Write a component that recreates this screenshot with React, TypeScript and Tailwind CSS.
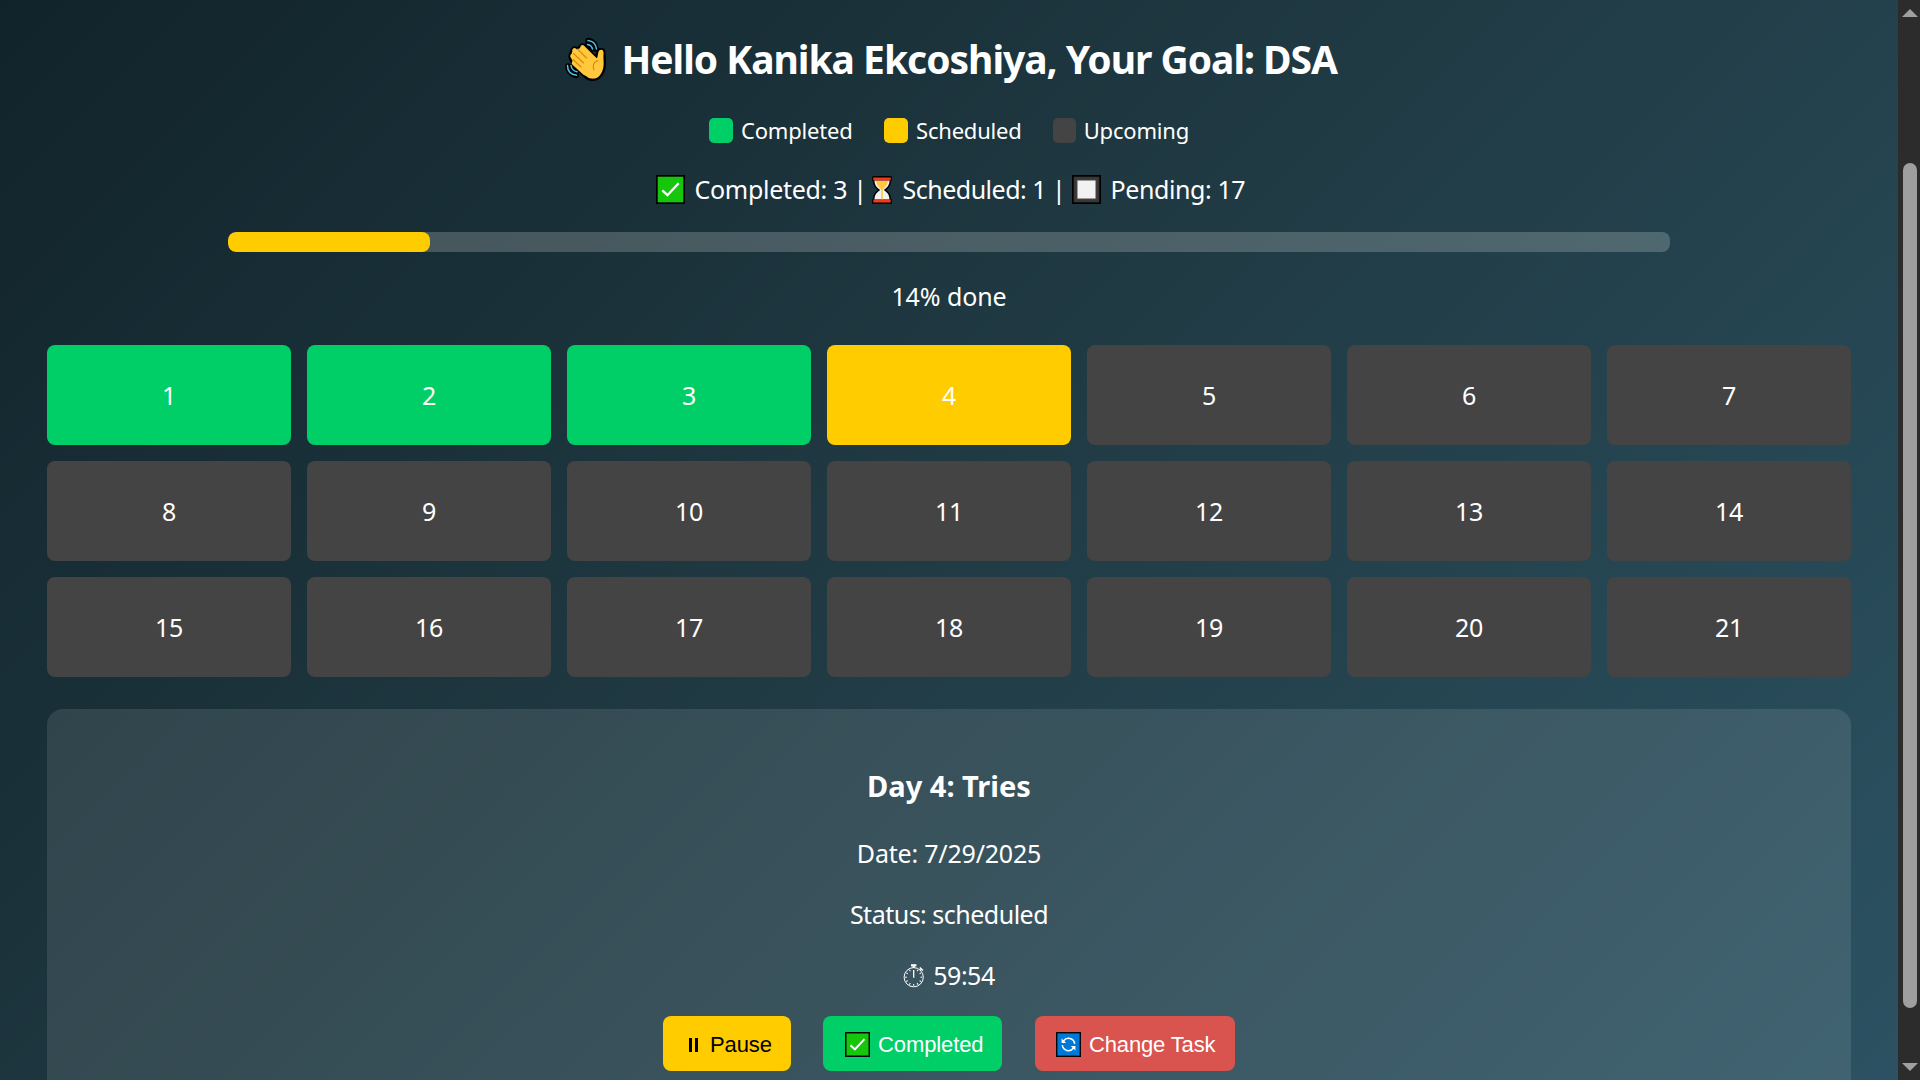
import type { ReactNode } from "react";

const HAND =
  "M16.5 12 L8.5 15.5 L7.5 20.5 L10 26 L22 38 C25 41 31 41 34 37 C37.5 33 37.5 27 37 22 L36.6 15 L35 15 L33 24 Z";

function WaveIcon() {
  return (
    <svg viewBox="0 0 41 44" className="mt-0.5 h-[44px] w-[41px] shrink-0" fill="none" strokeLinecap="round" strokeLinejoin="round">
      <g stroke="#000" strokeWidth="5.6">
        <path d="M23 3.5 C27.5 4 30.5 7 31 12" />
        <path d="M22.5 7.5 C25 8 26.5 9.5 27 12" />
        <path d="M3 29 C3 34 6.5 37.5 11.5 38.5" />
        <path d="M6.5 29.5 C7 32.5 9 34.5 11.5 35" />
      </g>
      <path d={HAND} stroke="#000" strokeWidth="7.6" fill="#000" />
      <g stroke="#000" strokeWidth="8">
        <path d="M17.5 10.5 L30 23" />
        <path d="M9.5 13.5 L24 28" />
        <path d="M7.5 19 L22 32" />
        <path d="M36.2 15 L35.5 24" />
      </g>
      <g stroke="#4cc2e4" strokeWidth="1.5">
        <path d="M23 3.5 C28 4 31 7.5 31.5 12" />
        <path d="M22.5 7.5 C25.5 8 27 9.5 27.5 12" />
        <path d="M2.5 28.5 C2.5 34 6 37.5 11.5 38.3" />
        <path d="M6 28.5 C6.5 32 8.5 34 12 34.8" />
      </g>
      <path d={HAND} stroke="#ffc83d" strokeWidth="3" fill="#ffc83d" />
      <g stroke="#ffc83d" strokeWidth="4.6">
        <path d="M17.5 10.5 L30 23" />
        <path d="M9.5 13.5 L24 28" />
        <path d="M7.5 19 L22 32" />
        <path d="M9 26 L20 36" />
        <path d="M36.2 15 L35.5 24" />
      </g>
      <g stroke="#d67d00" strokeWidth="1.1" opacity="0.85">
        <path d="M12.5 12 L21.5 21" />
        <path d="M8.5 16.5 L18.5 26" />
        <path d="M8 22.5 L16 30" />
        <path d="M33 23.5 C29 24.5 27 28.5 29 33" />
      </g>
    </svg>
  );
}

function CheckIcon({ className }: { className: string }) {
  return (
    <svg viewBox="0 0 29 29" className={className}>
      <rect width="29" height="29" fill="#000" />
      <rect x="1.7" y="1.7" width="25.6" height="25.6" fill="#16c60c" />
      <path d="M6.3 15.3 L11.5 20.2 L22.6 8.2" fill="none" stroke="#fff" strokeWidth="2.3" />
    </svg>
  );
}

function HourglassIcon() {
  return (
    <svg viewBox="0 0 20 28" className="h-[28px] w-[20px] shrink-0">
      <path
        d="M1.5 0 H18.5 Q20 0 20 1.5 V4 Q20 5 19 5.3 C19 9 17.5 11.5 14 14 C17.5 16.5 19 19 19 22.7 Q20 23 20 24 V26.5 Q20 28 18.5 28 H1.5 Q0 28 0 26.5 V24 Q0 23 1 22.7 C1 19 2.5 16.5 6 14 C2.5 11.5 1 9 1 5.3 Q0 5 0 4 V1.5 Q0 0 1.5 0 Z"
        fill="#000"
      />
      <path d="M2.5 4.5 H17.5 C17.5 9 15.5 11.3 11.8 14 C15.5 16.7 17.5 19 17.5 23.5 H2.5 C2.5 19 4.5 16.7 8.2 14 C4.5 11.3 2.5 9 2.5 4.5 Z" fill="#f2f2f2" />
      <path d="M4 5 H16 C15.5 9 13.5 11 10.8 13.5 V23.5 H9.2 V13.5 C6.5 11 4.5 9 4 5 Z" fill="#ffc83d" />
      <rect x="1.3" y="1.5" width="17.4" height="3" fill="#f03a17" />
      <rect x="1.3" y="23.5" width="17.4" height="3" fill="#f03a17" />
    </svg>
  );
}

function SquareIcon() {
  return (
    <svg viewBox="0 0 29 29" className="h-[29px] w-[29px] shrink-0">
      <rect width="29" height="29" fill="#000" />
      <rect x="1.7" y="1.7" width="25.6" height="25.6" fill="#383838" />
      <rect x="4.5" y="4.5" width="20" height="20" fill="#4d4545" />
      <rect x="5.5" y="5.5" width="18" height="18" fill="#f2f2f2" />
    </svg>
  );
}

function RefreshIcon() {
  return (
    <svg viewBox="0 0 25 25" className="h-[25px] w-[25px] shrink-0" fill="none">
      <rect width="25" height="25" fill="#000" />
      <rect x="1.4" y="1.4" width="22.2" height="22.2" fill="#0078d7" />
      <g stroke="#fff" strokeWidth="1.5">
        <path d="M7.5 9 A6.2 6.2 0 0 1 18.7 11.8" />
        <path d="M17.500 16 A6.2 6.2 0 0 1 6.3 13.2" />
      </g>
      <path d="M5.6 6.500 V11 H10.2 Z M19.4 18.500 V14 H14.8 Z" fill="#fff" />
    </svg>
  );
}

const TICKS = [30, 60, 90, 120, 150, 180, 210, 240, 270, 300, 330];

function StopwatchIcon() {
  return (
    <svg viewBox="0 0 22 24" className="h-[24px] w-[22px] shrink-0" fill="none" stroke="#fff">
      <circle cx="10.7" cy="13.2" r="9.6" strokeWidth="1" />
      <path d="M10.7 6 V13.8" strokeWidth="1.3" />
      <path d="M8 1.3 H13.4" strokeWidth="2.2" />
      <path d="M10.7 2 V4" strokeWidth="2" />
      <path d="M16.8 3.5 L20 6.5 M18.4 5 L17 6.5" strokeWidth="1.5" />
      {TICKS.map((a) => (
        <path key={a} d="M10.7 4.6 V6.4" strokeWidth="1" transform={`rotate(${a} 10.7 13.2)`} />
      ))}
    </svg>
  );
}

function LegendItem({ color, width, children }: { color: string; width: string; children: ReactNode }) {
  return (
    <div className={`flex items-center ${width}`}>
      <span className={`h-[25px] w-6 rounded-[5px] ${color}`} />
      <span className="ml-2 text-[22px] tracking-[-0.2px]">{children}</span>
    </div>
  );
}

function dayColor(day: number) {
  if (day <= 3) return "bg-[#00ce66]";
  if (day === 4) return "bg-[#ffcc00]";
  return "bg-[#444444]";
}

const DAYS = Array.from({ length: 21 }, (_, i) => i + 1);

export default function App() {
  return (
    <div className="flex h-screen overflow-hidden bg-[#2c2c2c] font-['Noto_Sans',sans-serif] text-[25px] whitespace-nowrap text-white">
      <main className="flex h-full w-[1898px] shrink-0 flex-col overflow-hidden bg-[linear-gradient(135deg,#0f2027,#203a43,#2c5364)] bg-[length:100%_1329px] bg-[position:0_-183px] px-[47px] pt-7">
        <header className="flex h-[60px] shrink-0 items-center justify-center">
          <div className="flex w-[769px] items-center">
            <WaveIcon />
            <h1 className="mt-0.5 ml-4 text-[39px] leading-[60px] font-bold tracking-[-1.02px]">
              Hello Kanika Ekcoshiya, Your Goal: DSA
            </h1>
          </div>
        </header>

        <div className="flex h-[85px] shrink-0 items-center justify-center">
          <LegendItem color="bg-[#00ce66]" width="w-[175px]">Completed</LegendItem>
          <LegendItem color="bg-[#ffcc00]" width="w-[169px]">Scheduled</LegendItem>
          <LegendItem color="bg-[#444444]" width="w-[136px]">Upcoming</LegendItem>
        </div>

        <div className="flex h-[33px] shrink-0 items-center justify-center">
          <CheckIcon className="h-[29px] w-[29px] shrink-0" />
          <span className="ml-[10px] w-[177px] tracking-[-0.3px]">Completed: 3 |</span>
          <HourglassIcon />
          <span className="ml-[11px] w-[169px] tracking-[-0.5px]">Scheduled: 1 |</span>
          <SquareIcon />
          <span className="ml-[10px] w-[132px] tracking-[-0.4px]">Pending: 17</span>
        </div>

        <div className="mx-auto mt-[26px] h-5 w-[1442px] shrink-0 overflow-hidden rounded-lg bg-white/20">
          <div className="h-full w-[14%] rounded-lg bg-[#ffcc00]" />
        </div>

        <p className="flex h-[93px] shrink-0 items-center justify-center pb-[3px] tracking-[-0.1px]">14% done</p>

        <div className="grid shrink-0 grid-cols-7 gap-4">
          {DAYS.map((day) => (
            <div key={day} className={`flex h-[100px] items-center justify-center rounded-lg pt-px tracking-[-0.2px] ${dayColor(day)}`}>
              {day}
            </div>
          ))}
        </div>

        <section className="mt-8 flex h-[500px] shrink-0 flex-col items-center rounded-2xl bg-white/10 pt-10">
          <h2 className="text-[29px] leading-[74px] font-bold">Day 4: Tries</h2>
          <p className="leading-[61px] tracking-[-0.2px]">Date: 7/29/2025</p>
          <p className="leading-[61px] tracking-[-0.5px]">Status: scheduled</p>
          <div className="flex h-[61px] items-center">
            <StopwatchIcon />
            <span className="ml-2 tracking-[-0.5px]">59:54</span>
          </div>
          <div className="mt-[10px] flex gap-8 font-['Liberation_Sans',Arial,sans-serif] text-[22px]">
            <button className="flex h-[55px] w-32 items-center rounded-lg bg-[#ffcc00] pl-[26px] text-black">
              <span className="flex gap-[3px] pt-0.5">
                <span className="h-[14px] w-[3px] bg-black" />
                <span className="h-[14px] w-[3px] bg-black" />
              </span>
              <span className="ml-3 pt-0.5 tracking-[-0.1px]">Pause</span>
            </button>
            <button className="flex h-[55px] w-[179px] items-center rounded-lg bg-[#00ce66] pl-[22px]">
              <CheckIcon className="mt-0.5 h-[25px] w-[25px] shrink-0" />
              <span className="ml-2 pt-0.5 tracking-[-0.1px]">Completed</span>
            </button>
            <button className="ml-px flex h-[55px] w-[200px] items-center rounded-lg bg-[#d9534f] pl-[21px]">
              <span className="mt-0.5">
                <RefreshIcon />
              </span>
              <span className="ml-2 pt-0.5 tracking-[-0.15px]">Change Task</span>
            </button>
          </div>
        </section>
      </main>

      <aside className="flex h-full w-[22px] shrink-0 flex-col items-center bg-[#2c2c2c] pt-[9px] pb-[9px] pl-0.5">
        <svg viewBox="0 0 16 8" className="h-2 w-4 shrink-0 fill-[#9f9f9f]">
          <path d="M8 0 L16 8 H0 Z" />
        </svg>
        <div className="mt-[146px] h-[845px] w-[14px] shrink-0 rounded-full bg-[#9f9f9f]" />
        <svg viewBox="0 0 16 8" className="mt-auto h-2 w-4 shrink-0 fill-[#9f9f9f]">
          <path d="M0 0 H16 L8 8 Z" />
        </svg>
      </aside>
    </div>
  );
}
